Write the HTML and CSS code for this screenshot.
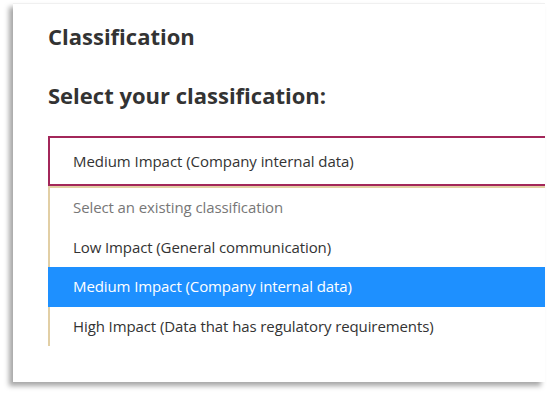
FILE: index.html
```html
<!DOCTYPE html>
<html lang="en">
<head>
    <meta charset="UTF-8">
    <meta name="viewport" content="width=device-width, initial-scale=1.0">
    <title>Classification</title>
    <link rel="stylesheet" href="styles.css">
</head>
<body>
<div class="panel">
    <h2 class="title">Classification</h2>
    <h3 class="label">Select your classification:</h3>
    <div class="picker">
        <div class="picker-value">Medium Impact (Company internal data)</div>
        <ul class="options">
            <li class="option placeholder">Select an existing classification</li>
            <li class="option">Low Impact (General communication)</li>
            <li class="option selected">Medium Impact (Company internal data)</li>
            <li class="option">High Impact (Data that has regulatory requirements)</li>
        </ul>
    </div>
</div>
</body>
</html>
```

FILE: styles.css
```css
body {
    font-family: "Open Sans", "Noto Sans", sans-serif;
    margin: 0;
    padding: 3px 5px 12px 13px;
    background-color: #fff;
    color: #333;
}

.panel {
    width: 532px;
    height: 379px;
    background-color: #fff;
    border-top: 1px solid #f0f0f0;
    box-sizing: border-box;
    box-shadow: -4px 4px 5px rgba(0, 0, 0, 0.35);
    padding: 18px 0 0 35px;
    overflow: hidden;
}

.title {
    font-size: 22px;
    font-weight: bold;
    margin: 0;
    line-height: 28px;
}

.label {
    font-size: 22px;
    font-weight: bold;
    margin: 31px 0 0;
    line-height: 28px;
}

.picker {
    margin-top: 27px;
    width: 520px;
}

.picker-value {
    border: 2px solid #a3275a;
    height: 46px;
    line-height: 46px;
    padding-left: 23px;
    font-size: 15px;
    letter-spacing: -0.05px;
}

.options {
    list-style: none;
    margin: 0;
    padding: 0;
    border-top: 2px solid #e2cfa5;
}

.option {
    height: 39.5px;
    line-height: 39px;
    padding-left: 23px;
    font-size: 15px;
    letter-spacing: -0.1px;
    border-left: 2px solid #e2cfa5;
}

.placeholder {
    color: #777;
}

.selected {
    background-color: #1e90ff;
    border-left-color: #1e90ff;
    color: #fff;
}
```
